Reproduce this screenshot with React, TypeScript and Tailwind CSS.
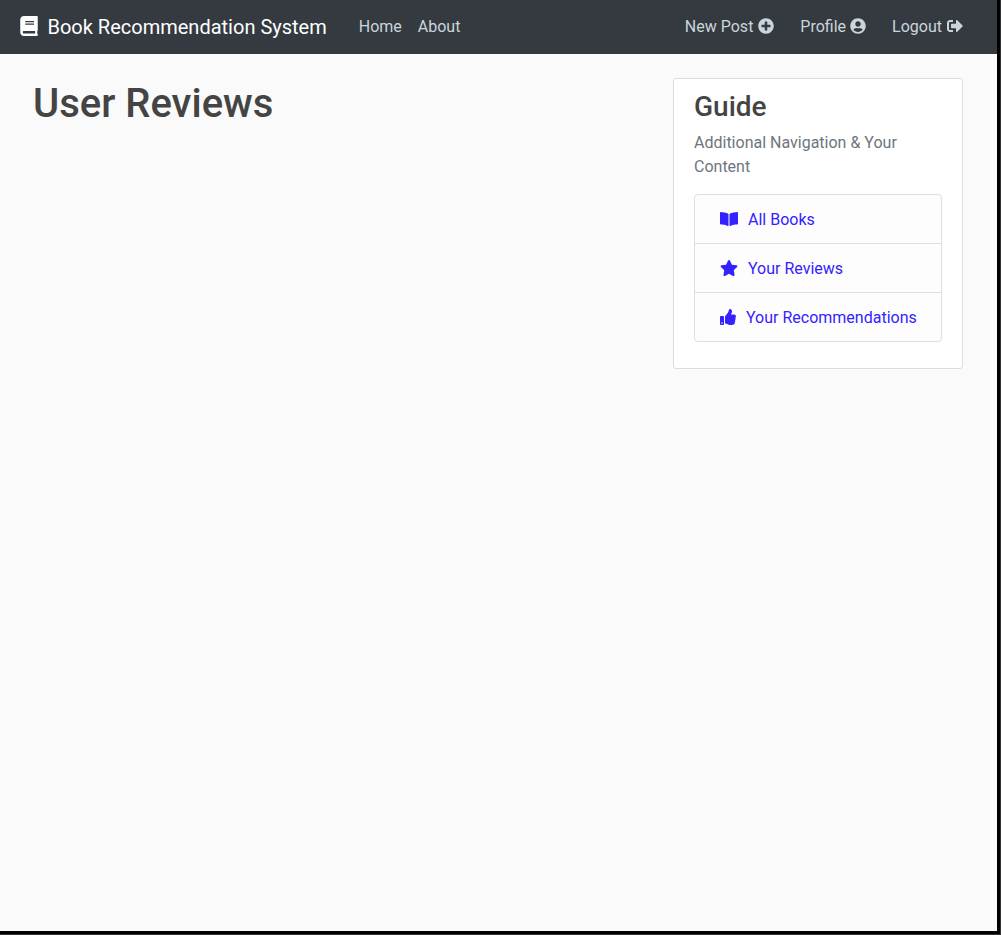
import { FaBook, FaBookOpen, FaStar, FaThumbsUp, FaPlusCircle, FaUserCircle, FaSignOutAlt } from "react-icons/fa";

const guideLinks = [
  { label: "All Books", icon: <FaBookOpen className="h-4 w-[18px]" /> },
  { label: "Your Reviews", icon: <FaStar className="h-4 w-[18px]" /> },
  { label: "Your Recommendations", icon: <FaThumbsUp className="size-4" /> },
];

export default function App() {
  return (
    <div className="h-[935px] w-[1001px] border-r border-b border-[#333333] bg-black pr-[3px] pb-[3px] font-['Roboto',sans-serif] text-base text-[#444444]">
      <div className="flex h-full flex-col bg-[#fafafa]">
        <header className="flex h-[54px] shrink-0 items-center bg-[#343a40] pr-[34px] pl-5 text-[#cbd5db]">
          <a href="#" className="flex items-center gap-[9.5px] text-xl leading-[30px] text-white">
            <FaBook className="mb-0.5 h-5 w-[18px]" />
            Book Recommendation System
          </a>
          <nav className="ml-8 flex gap-4">
            <a href="#">Home</a>
            <a href="#">About</a>
          </nav>
          <nav className="ml-auto flex gap-[26px]">
            <a href="#" className="flex items-center gap-[5px]">New Post <FaPlusCircle className="mb-0.5 size-4" /></a>
            <a href="#" className="flex items-center gap-1">Profile <FaUserCircle className="mb-0.5 size-4" /></a>
            <a href="#" className="flex items-center gap-[5px]">Logout <FaSignOutAlt className="mb-0.5 size-4" /></a>
          </nav>
        </header>
        <main className="flex items-start justify-between pt-6 pr-[34px] pl-[33px]">
          <h1 className="pt-0.5 text-[40px] leading-[48px] font-medium">User Reviews</h1>
          <aside className="h-[291px] w-[290px] rounded-[3px] border border-[#dddddd] bg-white px-5 pt-[11px]">
            <h2 className="mb-[7px] text-[28px] leading-[34px] font-medium">Guide</h2>
            <p className="mb-[15px] leading-6 text-[#6c757d]">Additional Navigation &amp; Your Content</p>
            <ul className="divide-y divide-[#dfdfdf] rounded border border-[#dfdfdf] bg-[#fdfdfe] text-[#3322ff]">
              {guideLinks.map((link) => (
                <li key={link.label}>
                  <a href="#" className="flex h-12 items-center gap-2.5 pl-[25px]">
                    {link.icon}
                    <span className="pt-0.5">{link.label}</span>
                  </a>
                </li>
              ))}
            </ul>
          </aside>
        </main>
      </div>
    </div>
  );
}
